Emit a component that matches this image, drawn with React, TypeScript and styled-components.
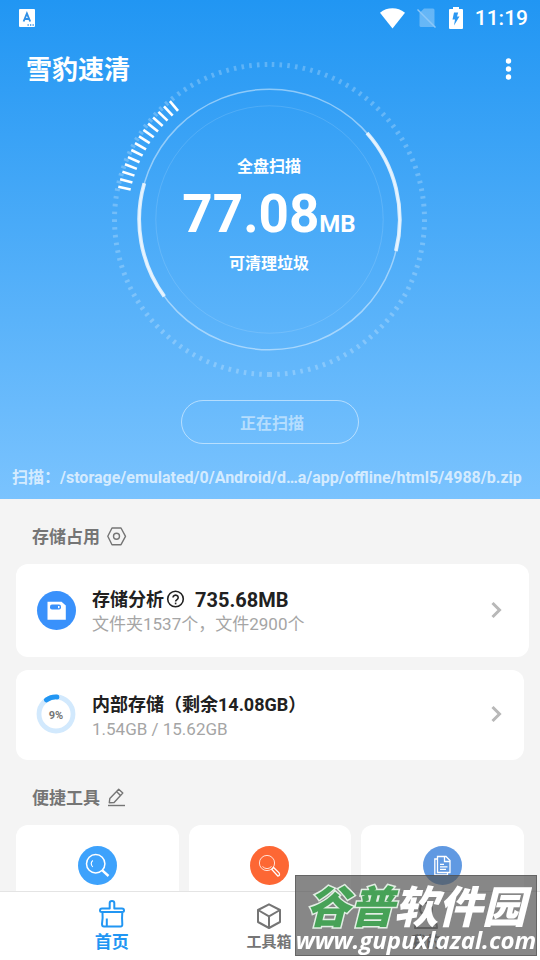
import React from "react";
import styled, { createGlobalStyle } from "styled-components";

const GlobalStyle = createGlobalStyle`
  *, *::before, *::after { box-sizing: border-box; }
  body {
    margin: 0;
    background: #f4f4f4;
    font-family: Roboto, "Noto Sans CJK SC", sans-serif;
  }
  button, a { font: inherit; color: inherit; }
  svg { display: block; }
`;

const Screen = styled.div`
  display: flex;
  flex-direction: column;
  height: 100vh;
  overflow: hidden;
`;

const Content = styled.main`
  flex: 1;
  min-height: 0;
  overflow: hidden;
`;

const Hero = styled.section`
  display: flex;
  flex-direction: column;
  align-items: center;
  color: #fff;
  background: linear-gradient(#2196f3, #7ac3fe);
`;

const StatusBar = styled.div`
  display: flex;
  align-items: center;
  justify-content: space-between;
  width: 100%;
  height: 36px;
  padding: 0 12px 0 19px;
`;

const StatusIcons = styled.div`
  display: flex;
  align-items: center;
  gap: 12px;
`;

const Clock = styled.time`
  font-size: 21px;
  line-height: 24px;
  font-weight: 500;
`;

const AppBar = styled.header`
  display: flex;
  align-items: center;
  justify-content: space-between;
  width: 100%;
  height: 64px;
  padding: 2px 20px 0 26px;
`;

const AppTitle = styled.h1`
  margin: 0;
  padding-top: 2px;
  font-size: 26px;
  line-height: 36px;
  font-weight: 700;
`;

const IconButton = styled.button`
  display: inline-flex;
  align-items: center;
  justify-content: center;
  padding: 0;
  border: 0;
  background: none;
  cursor: pointer;
`;

const Gauge = styled.div`
  display: grid;
  place-items: center;
  margin-top: -40px;
  pointer-events: none;
  & > * { grid-area: 1 / 1; }
`;

const GaugeText = styled.div`
  display: flex;
  flex-direction: column;
  align-items: center;
  font-size: 16px;
  line-height: 24px;
  font-weight: 700;
  padding: 0 2px 9px 0;
`;

const Amount = styled.strong`
  display: flex;
  align-items: baseline;
  margin: 7px 0 0;
  font-size: 53px;
  line-height: 56px;
  font-weight: 700;
`;

const Unit = styled.span`
  font-size: 24px;
`;

const ScanButton = styled.button`
  width: 178px;
  height: 44px;
  margin-top: 20px;
  padding: 0 0 0 4px;
  border: 1px solid rgba(255, 255, 255, 0.5);
  border-radius: 22px;
  background: none;
  color: rgba(255, 255, 255, 0.5);
  font-size: 16px;
  font-weight: 700;
`;

const ScanPath = styled.p`
  align-self: stretch;
  margin: 0;
  padding: 22px 12px 9px;
  overflow: hidden;
  white-space: nowrap;
  color: rgba(255, 255, 255, 0.7);
  font-size: 16px;
  line-height: 24px;
  font-weight: 700;
`;

const SectionTitle = styled.h2`
  display: flex;
  align-items: center;
  gap: 7px;
  height: 65px;
  margin: 0;
  padding: 10px 32px 0;
  color: #757575;
  font-size: 17px;
  line-height: 24px;
  font-weight: 700;
`;

const StorageCard = styled.article<{ $wide?: boolean }>`
  display: flex;
  align-items: center;
  gap: 16px;
  min-height: ${(p) => (p.$wide ? 93 : 90)}px;
  margin: 0 ${(p) => (p.$wide ? 11 : 16)}px 0 16px;
  padding: 0 ${(p) => (p.$wide ? 25 : 20)}px 2px 20px;
  border-radius: 12px;
  background: #fff;
  & + & { margin-top: 13px; }
`;

const CardBody = styled.div`
  flex: 1;
  padding-top: 5px;
`;

const CardTitle = styled.h3`
  display: flex;
  align-items: center;
  margin: 0;
  color: #212121;
  font-size: 18px;
  line-height: 24px;
  font-weight: 700;
`;

const CardSize = styled.span`
  margin-left: 10px;
  font-size: 20px;
`;

const CardDetail = styled.p`
  margin: 0;
  color: #a5a5a5;
  font-size: 17px;
  line-height: 24px;
`;

const ToolGrid = styled.div`
  display: grid;
  grid-template-columns: repeat(3, 1fr);
  gap: 10px;
  padding: 0 16px;
`;

const ToolCard = styled.button`
  display: flex;
  justify-content: center;
  height: 120px;
  padding: 21px 0 0;
  border: 0;
  border-radius: 12px;
  background: #fff;
`;

const NavBar = styled.nav`
  display: grid;
  grid-template-columns: repeat(3, 1fr);
  flex: none;
  height: 69px;
  padding: 6px 35px 0 33px;
  border-top: 1px solid #e4e4e4;
  background: #fff;
`;

const NavLink = styled.a<{ $active?: boolean }>`
  display: flex;
  flex-direction: column;
  align-items: center;
  color: ${(p) => (p.$active ? "#2196f3" : "#757575")};
  font-size: ${(p) => (p.$active ? 17 : 15)}px;
  line-height: 24px;
  font-weight: 700;
  text-decoration: none;
`;

const Watermark = styled.aside`
  position: fixed;
  right: 3px;
  bottom: 4px;
  display: flex;
  flex-direction: column;
  align-items: center;
  width: 242px;
  height: 81px;
  border: 1px solid rgba(80, 80, 80, 0.6);
  background: rgba(84, 84, 84, 0.7);
  color: #fff;
  font-style: italic;
  white-space: nowrap;
`;

const WatermarkName = styled.div`
  padding-top: 6px;
  font-family: "Noto Sans CJK SC", sans-serif;
  font-size: 44px;
  line-height: 44px;
  font-weight: 900;
`;

const WatermarkAccent = styled.span`
  color: #47a257;
  -webkit-text-stroke: 3px #e2eee4;
  paint-order: stroke fill;
`;

const WatermarkSite = styled.div`
  font-family: "Open Sans", sans-serif;
  font-size: 24px;
  line-height: 28px;
  font-weight: 700;
`;

const HALF_TICKS = Array.from({ length: 63 }, (_, i) => 0.45 + i * 2.875);
const TRACK_TICKS = [...HALF_TICKS, ...HALF_TICKS.map((a) => -a)];
const SCAN_TICKS = Array.from({ length: 14 }, (_, i) => 102.2 + i * 2.9);

function Dial() {
  return (
    <svg width="320" height="320" viewBox="-159.5 -159.5 320 320" fill="none" stroke="#fff">
      <g strokeWidth="2.6" strokeOpacity="0.24">
        {TRACK_TICKS.map((a) => (
          <path key={a} d="M0 152.5V157.5" transform={`rotate(${a})`} />
        ))}
      </g>
      <g strokeWidth="2.6">
        {SCAN_TICKS.map((a) => (
          <path key={a} d="M0 142V154.7" transform={`rotate(${a})`} />
        ))}
      </g>
      <circle r="130.3" strokeWidth="1.5" strokeOpacity="0.45" />
      <circle r="113.7" strokeWidth="1" strokeOpacity="0.13" />
      <g strokeWidth="3.8" strokeOpacity="0.78">
        <path d="M97.5 -86.4A130.3 130.3 0 0 1 126.4 31.5" />
        <path d="M-125.2 -36.2A130.3 130.3 0 0 0 -105.2 76.9" />
      </g>
    </svg>
  );
}

function KeyboardBadge() {
  return (
    <svg width="16" height="18" viewBox="0 0 16 18">
      <rect width="16" height="18" rx="1" fill="#fff" />
      <path d="M4.6 12.5 7.9 4.5 11.2 12.5M5.8 10h4.2" fill="none" stroke="#2f8fe6" strokeWidth="1.9" />
      <path d="M8.5 16h1.3M11 16h1.3M13.5 16h1.3" stroke="#2f8fe6" strokeWidth="1.4" />
    </svg>
  );
}

function WifiIcon() {
  return (
    <svg width="26" height="21" viewBox="0 0 26 21">
      <path d="M13.5 20.5 1 4.8C4.5 1.6 9 0.2 13.5 0.2s8.500 1.400 12.500 4.600Z" fill="#fff" />
    </svg>
  );
}

function NoSimIcon() {
  return (
    <svg width="20" height="20" viewBox="0 0 20 20">
      <path d="M2.5 5 7 0.5H16Q17.5 0.5 17.5 2V17.5Q17.5 19 16 19H4Q2.5 19 2.5 17.5Z" fill="#fff" opacity="0.3" />
      <path d="M0.5 1.5 18.5 19.5" stroke="#8cc7f8" strokeWidth="1.5" />
    </svg>
  );
}

function BatteryIcon() {
  return (
    <svg width="14" height="22" viewBox="0 0 14 22">
      <path d="M0 3Q0 2 1 2H4V0H10V2H13Q14 2 14 3V21Q14 22 13 22H1Q0 22 0 21Z" fill="#fff" />
      <path d="M5 5.5H9.2L8 9.5H10.5L5 18.5 6 12.5H3.5Z" fill="#2c98f2" />
    </svg>
  );
}

function MoreIcon() {
  return (
    <svg width="24" height="24" viewBox="0 0 24 24" fill="#fff">
      <circle cx="12.5" cy="4" r="2.7" />
      <circle cx="12.5" cy="12" r="2.7" />
      <circle cx="12.5" cy="20" r="2.7" />
    </svg>
  );
}

function HexIcon() {
  return (
    <svg width="20" height="20" viewBox="0 0 20 20" fill="none" stroke="#757575" strokeWidth="1.4">
      <path d="M5 1H14L18.500 9.300 14 17.700H5L0.800 9.300Z" strokeLinejoin="round" />
      <circle cx="9.500" cy="9.300" r="3" />
    </svg>
  );
}

function PencilIcon() {
  return (
    <svg width="20" height="20" viewBox="0 0 20 20" fill="none" stroke="#757575" strokeWidth="1.4" strokeLinejoin="round">
      <path d="M2.3 14.7 2.8 10.5 11.7 1.300 15.800 5.100 7.100 14.500Z" />
      <path d="M9.500 3.600 13.500 7.400" />
      <path d="M1 17.500H18" />
    </svg>
  );
}

function HelpIcon() {
  return (
    <svg width="21" height="21" viewBox="0 0 21 21" fill="none" stroke="#212121" strokeWidth="1.6">
      <circle cx="11.5" cy="9" r="7.8" />
      <path d="M9 7.5a2.6 2.4 0 1 1 4 2.1c-1 .7-1.4 1-1.4 2" />
      <path d="M11.6 12.6v1.7" />
    </svg>
  );
}

function DiskIcon() {
  return (
    <svg width="40" height="40" viewBox="0 0 40 40">
      <circle cx="20.5" cy="20.5" r="19.5" fill="#3991fb" />
      <path d="M11.5 11.8H25.5L29.8 15.5V29.8H11.5Z" fill="#fff" />
      <rect x="14" y="14.5" width="11" height="5" rx="2" fill="#3991fb" />
      <rect x="22" y="16" width="1.5" height="2.2" fill="#fff" />
    </svg>
  );
}

function UsageRing() {
  return (
    <svg width="40" height="40" viewBox="0 0 40 40" fill="none">
      <circle cx="20" cy="20" r="17" stroke="#d2e9fd" strokeWidth="4.8" />
      <path d="M10.3 6A17 17 0 0 1 21 3" stroke="#2196f3" strokeWidth="4.8" strokeLinecap="round" />
      <text x="20" y="24.5" textAnchor="middle" fill="#757575" fontSize="11" fontWeight="700">9%</text>
    </svg>
  );
}

function ChevronIcon() {
  return (
    <svg width="16" height="18" viewBox="0 0 16 18" fill="none" stroke="#b8b8b8" strokeWidth="3">
      <path d="M4.5 2 11.5 9 4.5 16" />
    </svg>
  );
}

function SearchTool() {
  return (
    <svg width="39" height="39" viewBox="0 0 39 39" fill="none" stroke="#fff">
      <circle cx="19.5" cy="19.5" r="19.5" fill="#3da2fc" stroke="none" />
      <circle cx="17.7" cy="17.7" r="9.2" strokeWidth="1.5" />
      <path d="M14.8 14.5Q11.6 17.5 14.8 21" strokeWidth="1.1" />
      <path d="M24.3 24.3 30.5 30" strokeWidth="2.4" />
    </svg>
  );
}

function CleanTool() {
  return (
    <svg width="39" height="39" viewBox="0 0 39 39" fill="none" stroke="#fff" strokeWidth="1">
      <circle cx="19.5" cy="19.5" r="19.5" fill="#fd6734" stroke="none" />
      <circle cx="17" cy="17" r="7.6" strokeOpacity="0.8" />
      <path d="M12.5 20.5Q17 24.8 21.5 20.5" strokeOpacity="0.8" />
      <path d="M22.3 22.3 23 23M21.8 23.400 23.600 21.500 29 26.800Q30.500 29.500 27.800 30Z" strokeWidth="1.300" />
    </svg>
  );
}

function FilesTool() {
  return (
    <svg width="39" height="39" viewBox="0 0 39 39" fill="none" stroke="#fff" strokeWidth="1.3">
      <circle cx="19.5" cy="19.5" r="19.5" fill="#6099e2" stroke="none" />
      <path d="M14.5 10.5H23L27 14.5V26.5H14.5Z" />
      <path d="M21.5 10.5V15.5H27M14.5 13H11.8V28.8H24.5V26.5" />
      <path d="M17 18.3H21M17 20.8H24.5M17 23.3H23" />
    </svg>
  );
}

function BroomIcon() {
  return (
    <svg width="32" height="32" viewBox="0 0 32 32" fill="none" stroke="currentColor" strokeWidth="2" strokeLinejoin="round">
      <path d="M13.7 10.5V5Q13.7 3 16 3T18.3 5V10.5H26Q28 10.5 28 12.5Q28 14 26 14H6Q4 14 4 12.5Q4 10.5 6 10.5Z" />
      <path d="M6.500 14.500Q7 20 6 26Q6 28.500 8 28.500H24.500Q26.500 28.500 26.300 26Q25.800 20 26.300 14.500" />
      <path d="M10.800 28V20.500" />
    </svg>
  );
}

function BoxIcon() {
  return (
    <svg width="32" height="32" viewBox="0 0 32 32" fill="none" stroke="currentColor" strokeWidth="2" strokeLinejoin="round">
      <path d="M16 6.3 27 12V24L16 30 5 24V12Z" />
      <path d="M5 12 16 18.3 27 12M16 18.3V30" />
    </svg>
  );
}

function PersonIcon() {
  return (
    <svg width="32" height="32" viewBox="0 0 32 32" fill="none" stroke="currentColor" strokeWidth="2" strokeLinejoin="round">
      <circle cx="16" cy="11" r="6" />
      <path d="M5 30Q5 20 16 20T27 30Z" />
    </svg>
  );
}

export default function App() {
  return (
    <Screen>
      <GlobalStyle />
      <Content>
        <Hero>
          <StatusBar>
            <KeyboardBadge />
            <StatusIcons>
              <WifiIcon />
              <NoSimIcon />
              <BatteryIcon />
              <Clock>11:19</Clock>
            </StatusIcons>
          </StatusBar>
          <AppBar>
            <AppTitle>雪豹速清</AppTitle>
            <IconButton type="button" aria-label="更多"><MoreIcon /></IconButton>
          </AppBar>
          <Gauge>
            <Dial />
            <GaugeText>
              <span>全盘扫描</span>
              <Amount>77.08<Unit>MB</Unit></Amount>
              <span>可清理垃圾</span>
            </GaugeText>
          </Gauge>
          <ScanButton type="button">正在扫描</ScanButton>
          <ScanPath>扫描：/storage/emulated/0/Android/d…a/app/offline/html5/4988/b.zip</ScanPath>
        </Hero>

        <SectionTitle>
          存储占用
          <IconButton type="button" aria-label="存储设置"><HexIcon /></IconButton>
        </SectionTitle>
        <StorageCard $wide>
          <DiskIcon />
          <CardBody>
            <CardTitle>
              存储分析
              <IconButton type="button" aria-label="说明"><HelpIcon /></IconButton>
              <CardSize>735.68MB</CardSize>
            </CardTitle>
            <CardDetail>文件夹1537个，文件2900个</CardDetail>
          </CardBody>
          <IconButton type="button" aria-label="查看存储分析"><ChevronIcon /></IconButton>
        </StorageCard>
        <StorageCard>
          <UsageRing />
          <CardBody>
            <CardTitle>内部存储（剩余14.08GB）</CardTitle>
            <CardDetail>1.54GB / 15.62GB</CardDetail>
          </CardBody>
          <IconButton type="button" aria-label="查看内部存储"><ChevronIcon /></IconButton>
        </StorageCard>

        <SectionTitle>
          便捷工具
          <IconButton type="button" aria-label="编辑工具"><PencilIcon /></IconButton>
        </SectionTitle>
        <ToolGrid>
          <ToolCard type="button" aria-label="搜索"><SearchTool /></ToolCard>
          <ToolCard type="button" aria-label="清理"><CleanTool /></ToolCard>
          <ToolCard type="button" aria-label="文件"><FilesTool /></ToolCard>
        </ToolGrid>
      </Content>

      <NavBar>
        <NavLink href="#home" $active><BroomIcon />首页</NavLink>
        <NavLink href="#tools"><BoxIcon />工具箱</NavLink>
        <NavLink href="#me"><PersonIcon />我的</NavLink>
      </NavBar>

      <Watermark>
        <WatermarkName><WatermarkAccent>谷普</WatermarkAccent>软件园</WatermarkName>
        <WatermarkSite>www.gupuxlazal.com</WatermarkSite>
      </Watermark>
    </Screen>
  );
}
